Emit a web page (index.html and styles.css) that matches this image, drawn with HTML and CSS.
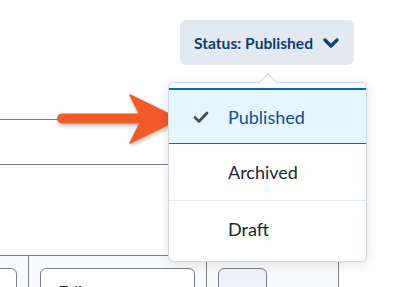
FILE: index.html
```html
<!DOCTYPE html>
<html lang="en">
<head>
    <meta charset="UTF-8">
    <title>Status menu</title>
    <link rel="stylesheet" href="styles.css">
</head>
<body>
    <div class="page">
        <div class="toolbar">
            <button class="status-button">
                <span>Status: Published</span>
                <svg class="chevron" width="16" height="10" viewBox="0 0 16 10">
                    <path d="M2 2l6 6 6-6" fill="none" stroke="currentColor" stroke-width="3.2" stroke-linecap="round" stroke-linejoin="round"/>
                </svg>
            </button>
        </div>

        <div class="text-field"></div>

        <div class="table-row">
            <div class="cell cell-first">
                <div class="box box-left"></div>
            </div>
            <div class="cell cell-wide">
                <div class="box box-input">Edit</div>
            </div>
            <div class="cell cell-narrow">
                <div class="box box-filled"></div>
            </div>
        </div>
    </div>

    <!-- callout arrow -->
    <svg class="arrow" width="400" height="287" viewBox="0 0 400 287">
        <line x1="62" y1="118.5" x2="140" y2="118.5" stroke="#f15a29" stroke-width="10" stroke-linecap="round"/>
        <path d="M130 95 L179 119 L130 143 L142 119 Z" fill="#f15a29" stroke="#f15a29" stroke-width="1.5" stroke-linejoin="round"/>
    </svg>

    <div class="menu">
        <div class="menu-caret"></div>
        <div class="menu-item selected">
            <svg class="check" width="16" height="13" viewBox="0 0 16 13">
                <path d="M2 6.5l4 4 8-8.5" fill="none" stroke="#494c4e" stroke-width="2.6" stroke-linecap="round" stroke-linejoin="round"/>
            </svg>
            <span>Published</span>
        </div>
        <div class="menu-item">
            <span>Archived</span>
        </div>
        <div class="menu-item">
            <span>Draft</span>
        </div>
    </div>
</body>
</html>
```

FILE: styles.css
```css
body {
    font-family: Lato, 'Noto Sans', sans-serif;
    margin: 0;
    padding: 0;
    background-color: #fff;
    width: 400px;
    height: 287px;
    overflow: hidden;
    position: relative;
}
.page {
    padding-top: 20px;
}
.toolbar {
    display: flex;
    justify-content: flex-end;
    padding-right: 46px;
}
.status-button {
    display: flex;
    align-items: center;
    gap: 10px;
    height: 45px;
    padding: 0 15px 0 14px;
    border: none;
    border-radius: 6px;
    background-color: #e3e9f1;
    color: #0b3f73;
    font-family: Lato, sans-serif;
    font-size: 15.6px;
    font-weight: 700;
}
.chevron {
    display: block;
}
.text-field {
    margin-top: 54px;
    margin-left: -20px;
    width: 320px;
    height: 44px;
    border: 1px solid #7a7f83;
    border-radius: 6px;
}
.table-row {
    display: flex;
    margin-top: 90px;
    width: 339px;
    height: 32px;
    border-top: 1px solid #7a7f83;
}
.cell {
    box-sizing: border-box;
    background-color: #f9fafc;
    border-right: 1px solid #7a7f83;
    padding-top: 12px;
    overflow: hidden;
}
.cell-first {
    width: 29px;
}
.cell-wide {
    width: 178px;
    padding-left: 11px;
}
.cell-narrow {
    width: 132px;
    padding-left: 11px;
}
.box {
    box-sizing: border-box;
    height: 40px;
    border: 1px solid #7a7f83;
    border-radius: 6px;
    background-color: #fff;
}
.box-left {
    margin-left: -40px;
    width: 57px;
}
.box-input {
    width: 155px;
    padding: 12px 0 0 17px;
    font-size: 18px;
    color: #202122;
}
.box-filled {
    width: 49px;
    background-color: #eef1f7;
}
.arrow {
    position: absolute;
    left: 0;
    top: 0;
    filter: drop-shadow(1px 2px 2px rgba(0,0,0,0.3));
}
.menu {
    position: absolute;
    left: 168px;
    top: 82px;
    width: 199px;
    box-sizing: border-box;
    padding: 5px 0 5px;
    background-color: #fff;
    border: 1px solid #d3d9e3;
    border-radius: 6px;
    box-shadow: 0 2px 12px rgba(0,0,0,0.12);
}
.menu-caret {
    position: absolute;
    left: 92px;
    top: -7px;
    width: 13px;
    height: 13px;
    background-color: #fff;
    border-left: 1px solid #d3d9e3;
    border-top: 1px solid #d3d9e3;
    transform: rotate(45deg);
}
.menu-item {
    position: relative;
    display: flex;
    align-items: center;
    height: 56px;
    box-sizing: border-box;
    padding-left: 59px;
    font-size: 18px;
    color: #202436;
    border-top: 1px solid #e3e9f1;
}
.menu-item:nth-child(2) {
    border-top: none;
}
.menu-item:nth-child(3) {
    border-top: none;
}
.menu-item.selected {
    background-color: #e6f6ff;
    border-top: 2px solid #006fbf;
    border-bottom: 1px solid #006fbf;
    color: #0a4f96;
}
.check {
    position: absolute;
    left: 24px;
    top: 21px;
}
```
